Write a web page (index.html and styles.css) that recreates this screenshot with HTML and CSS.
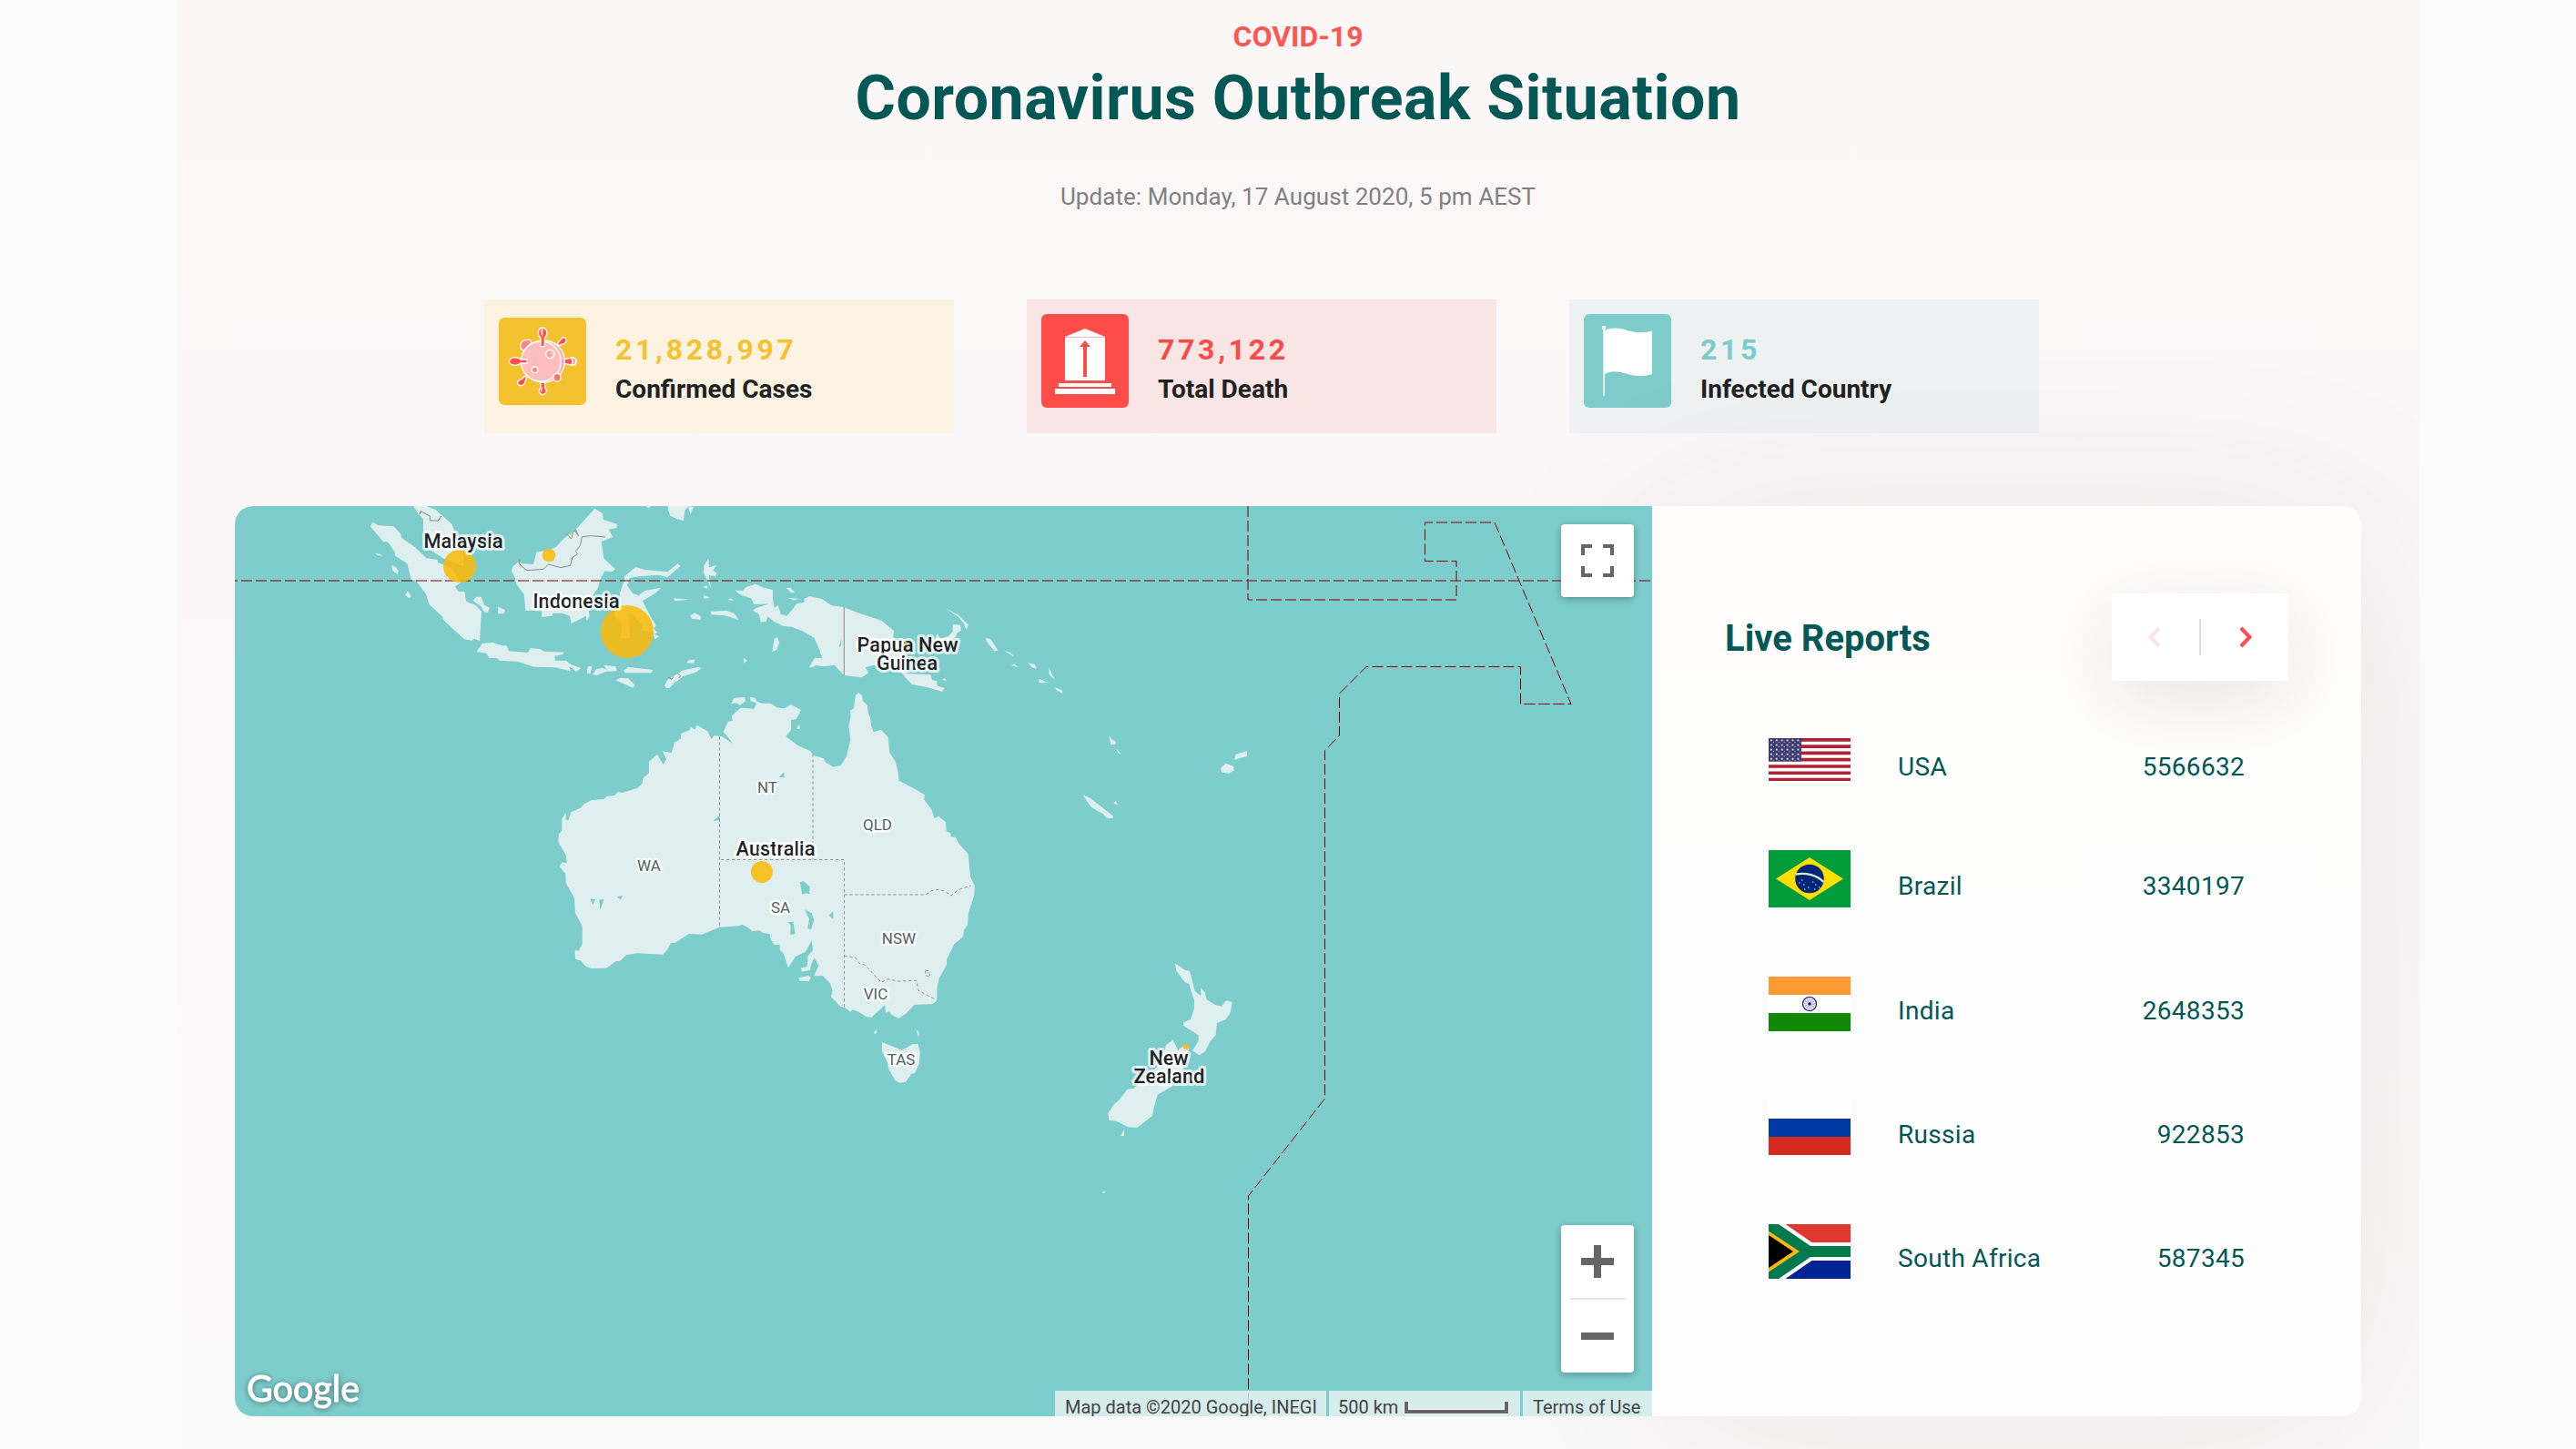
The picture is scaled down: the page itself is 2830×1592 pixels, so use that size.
FILE: index.html
```html
<!DOCTYPE html>
<html lang="en">
<head>
<meta charset="utf-8">
<title>Coronavirus Outbreak Situation</title>
<link rel="stylesheet" href="styles.css">
</head>
<body>
<main class="page">
  <header class="intro">
    <p class="eyebrow">COVID-19</p>
    <h1 class="title">Coronavirus Outbreak Situation</h1>
    <p class="updated">Update: Monday, 17 August 2020, 5 pm AEST</p>
  </header>

  <section class="stats">
    <article class="stat stat-cases">
      <svg class="stat-icon stat-icon-cases" viewBox="24 27 288 288">
        <rect x="24" y="27" width="288" height="288" rx="18" fill="#f4c22f"/>
        <g stroke="#fff" stroke-width="4" stroke-linejoin="round">
          <path d="M97 130c-6-20 6-30 20-30 8-2 14 2 14 10l-24 26z" fill="#ff8785"/>
          <path d="M218 112l14-18c8-4 15 0 14 8-1 9-8 13-16 13l-10 6z" fill="#ff4e4b"/>
          <path d="M116 223l-8 22c-6 8-17 8-22 0-2-8 5-13 13-15l11-10z" fill="#ff4e4b"/>
          <path d="M236 165l20-4c8-5 23-2 23 10s-14 17-23 10l-20-3z" fill="#ff4e4b"/>
          <path d="M262 160c10-3 17 3 17 11s-8 14-16 11c5-7 5-14-1-22z" fill="#ff9f9e"/>
          <path d="M162 240v18c-9 8-7 20 6 23 14-3 17-15 8-24v-17z" fill="#ff4e4b"/>
          <circle cx="172" cy="171" r="69" fill="#ffa9a8"/>
          <circle cx="163" cy="171" r="66" fill="#ffbdbd"/>
          <path d="M162 122V94c-11-9-11-32 6-34 17 2 18 24 7 34v28z" fill="#ff4e4b"/>
          <path d="M118 165H96c-8-9-35-10-38 6 3 16 28 16 38 6h22z" fill="#ff4e4b"/>
          <ellipse cx="193" cy="147" rx="14" ry="14" fill="#ffbdbd"/>
          <ellipse cx="216" cy="224" rx="12" ry="13" fill="#ff7371"/>
          <circle cx="143" cy="199" r="10" fill="#ff8785"/>
        </g>
        <path d="M161 70c3-8 8-8 10-4-3 8 1 14-3 25-5-6-7-15-7-21zM165 252c4 8 3 16 0 22-7-7-5-16 0-22z" fill="#ffbdbd"/>
        <path d="M193 136c5 6 5 16 0 22-14-3-14-19 0-22z" fill="#ff9f9e"/>
      </svg>
      <div class="stat-text"><strong class="stat-value">21,828,997</strong><span class="stat-label">Confirmed Cases</span></div>
    </article>
    <article class="stat stat-deaths">
      <svg class="stat-icon" viewBox="0 0 96 103">
        <rect width="96" height="103" rx="6" fill="#fe4c49"/>
        <path d="M26 25L48 16l22 9v48H26zM19 76h58v4H19zM15 82h66v6H15z" fill="#fff"/>
        <path d="M26 25.4h44" stroke="#fe9c9a" stroke-width=".8"/>
        <path d="M46 69V36h-4l6-7 6 7h-4v33z" fill="#fe4c49"/>
      </svg>
      <div class="stat-text"><strong class="stat-value">773,122</strong><span class="stat-label">Total Death</span></div>
    </article>
    <article class="stat stat-countries">
      <svg class="stat-icon" viewBox="0 0 96 103">
        <rect width="96" height="103" rx="6" fill="#7dcccb"/>
        <circle cx="22" cy="15" r="2.2" fill="#fff"/>
        <path d="M21.3 16v74h1.6V66c18-9 28 8 52 0V18.500c-24 7-32-9-52-.5v-2z" fill="#fff"/>
      </svg>
      <div class="stat-text"><strong class="stat-value">215</strong><span class="stat-label">Infected Country</span></div>
    </article>
  </section>

  <section class="dashboard">
    <div class="map">
      <svg class="map-canvas" viewBox="258 556 1557 1000">
        <g class="land" transform="translate(380 540) scale(.333333)">
          <path d="M80 115L88 101 108 112 158 115 182 142 183 153 226 182 265 220 302 225 303 234 345 250 380 300 360 313 370 329 391 330 396 362 428 375 447 395 441 493 424 485 415 491 390 487 350 450 320 422 318 412 275 373 264 338 231 293 215 290 202 238 163 212 161 200 138 166 124 166z"/>
          <path d="M222 48L265 48 295 60 350 108 362 145 385 200 388 248 320 220 275 190 255 130 255 90 240 75z"/>
          <path d="M96 203l16 3 9 7-17-3zM150 243l15 7 8 12-2 11-17-12zM204 328l11 18-7 6-12-11zM418 360l12-13h16l10 27 18 9-6 17-12-3-11-19zM502 380l23 11-5 12h-19z"/>
          <path d="M545 262L552 245 572 230 580 238 618 240 628 200 660 194 690 185 718 155 760 123 820 56 846 72 848 93 893 107 893 120 866 125 880 150 842 165 850 220 888 256 876 265 853 262 838 290 830 320 815 340 800 395 803 410 795 427 790 410 780 417 742 435 738 410 712 401 682 401 680 410 645 414 645 392 592 392 587 340 562 306 558 285z"/>
          <path d="M431 528L450 500 485 498 515 508 530 508 537 526 600 531 608 516 640 519 654 527 720 530 713 538 688 542 690 557 725 557 742 570 776 583 757 594 747 583 736 577 740 592 690 580 620 578 565 560 508 558 498 550 472 548 462 533z"/>
          <path d="M797 577l15-2-6 25h-12zM813 604l13-19 19-3 15 5-11-15 41 5 3 15-35 1-30 12zM915 590l15-12 81 10-3 10h-88zM889 622l16-8 25 2 23 22-7 9zM1050 640l10-20 38-22 10-8 52-11 12 3-17 13-45 15-25 20-19 18h-11zM1123 565l7-9 20-2-3 12zM1311 548l11 8-10 11z"/>
          <path d="M918 294L918 280 933 268 955 249 985 258 1060 265 1094 238 1102 246 1060 283 1030 275 965 280 935 285 927 310 945 335 965 343 985 327 1040 317 1020 335 978 360 990 385 1003 410 1022 442 1014 452 1028 466 1015 470 1033 477 1018 487 1010 462 975 458 975 435 955 420 938 395 930 410 937 483 906 484 910 435 885 410 885 390 905 370 902 335z"/>
          <path d="M1061 48h69l-13 14-4 35-23-7-20-10-8-18zM1128 48l18 2-10 26zM990 48h15l-7 7zM1195 220l2 30 25-8-12 18 12 8-3 12-23-5 7 43-18-38-7-15 2-20zM1080 352l52 4-47 5zM1180 342l20 9-20 2zM1176 315l14-5 2 10zM1258 358l10-6 12 8zM1134 410l16-10 20 12-2 10-26-2zM1202 395l53-2 25 9 15 22-45-15-45-3z"/>
        </g>
        <g class="land" transform="translate(780 540) scale(.333333)">
          <path d="M82 325L108 328 118 316 150 305 180 318 207 324 207 355 212 383 225 376 233 404 253 410 275 385 285 370 311 365 310 355 328 345 370 355 400 375 442 382 500 404 565 425 606 459 604 483 640 510 640 590 650 600 727 604 733 622 748 625 748 640 773 648 765 660 718 646 667 636 650 620 630 595 590 575 540 572 512 580 523 598 500 613 442 606 410 572 370 577 350 573 335 580 327 580 345 548 370 550 360 520 343 482 305 460 268 446 240 443 210 428 190 412 185 428 167 431 162 405 142 393 150 385 195 370 145 372 135 352 98 340z"/>
          <path d="M250 317h15l15 17h-12zM257 350l38 4-20 4zM205 528l7-43 10-5 7 18-9 24zM740 490l10-22 7 17 28-7 15-16v-24l25 2 3 18-13 8-5 14-40 20-40 5zM775 384l45 24 32 32-7 16-7-18-18-24zM909 482l16 5 25 37-13 2-25-31zM970 525l20 5 14 16zM992 573l11-5 12 11zM1047 563l23 7 7 15-15-5zM1116 580l21 42-19-19zM1085 618l33 13-34-1zM1135 645l25 10 3 10-18-7zM765 622l8-6 9 8z"/>
          <path class="water" d="M433 485v22l-9 8z"/>
        </g>
        <g class="land" transform="translate(590 740) scale(.333333)">
          <path d="M1050 72L1060 62 1072 74 1074 90 1089 105 1091 130 1098 145 1101 172 1109 193 1134 185 1157 210 1162 260 1181 290 1190 325 1193 353 1235 375 1278 400 1275 415 1300 448 1310 478 1322 470 1347 490 1349 520 1362 525 1365 538 1380 540 1390 560 1421 595 1428 670 1442 698 1441 730 1422 790 1419 828 1407 845 1404 868 1375 892 1350 943 1350 960 1325 1005 1318 1040 1318 1078 1303 1089 1243 1092 1215 1122 1191 1136 1168 1125 1162 1114 1149 1118 1147 1092 1102 1133 1085 1131 1060 1115 1040 1108 1033 1115 1015 1102 1000 1098 969 1065 974 1045 965 1020 942 996 913 997 928 962 914 937 903 960 900 978 872 983 870 970 890 967 893 930 909 912 905 880 885 917 852 933 828 970 813 925 800 910 800 895 780 893 768 870 767 858 745 855 732 847 709 849 695 837 675 827 665 832 601 836 543 860 500 858 456 887 441 888 432 905 416 926 330 922 294 928 273 948 260 948 229 971 180 972 160 965 143 946 126 941 125 911 138 914 149 890 149 832 126 790 123 740 95 690 94 660 75 637 82 622 98 625 96 600 70 555 72 530 82 518 82 480 95 458 95 483 104 483 112 457 143 443 155 430 180 417 220 414 230 404 255 402 267 390 280 393 330 378 347 362 349 345 369 328 369 290 396 267 416 300 426 283 414 256 443 262 453 227 473 215 475 197 503 187 506 175 520 185 527 170 562 190 575 216 583 204 610 208 645 231 625 205 614 192 630 158 645 155 641 140 671 113 715 116 724 98 703 90 702 77 718 80 725 92 742 98 770 98 790 112 815 115 836 102 870 120 855 150 837 153 837 185 820 207 860 238 900 255 912 270 945 280 950 292 977 308 1002 302 1020 272 1033 218 1027 175 1034 140 1032 122 1044 115z"/>
          <path d="M639 100l11-20 35-2 1 14-18 12-13-7zM855 182l10-15 1 16zM862 1003l33-7 7 7-6 11-31-1zM1110 1187l7-17 3 16zM1249 1174l11 11-3 13z"/>
          <path d="M1137 1215L1202 1241 1240 1221 1256 1222 1262 1248 1260 1285 1245 1317 1233 1320 1215 1346 1193 1349 1178 1338 1157 1300 1156 1285 1137 1245z"/>
          <path class="water" d="M797 342l17-17 1 17zM580 486l22-19v16zM867 688l11-4 22 20-3 16 4 7-13-3-15 4zM882 777l23 13 8 22-10 32-11-4 5-30zM962 797l14-14v27zM827 820l17-2 7 40-16 3 1-31zM175 743l17 1-8 18zM205 745h15l-12 35zM264 735l20-3-10 14z"/>
        </g>
        <g class="land" transform="translate(1180 750) scale(.333333)">
          <path d="M333 925L365 947 380 950 388 975 398 1017 418 1033 417 1005 432 1022 437 1045 465 1062 485 1067 502 1048 521 1052 515 1088 500 1110 471 1122 467 1162 447 1185 432 1216 413 1228 390 1213 410 1182 410 1162 360 1130 360 1120 384 1110 396 1073 396 1048 378 993 366 988 337 950z"/>
          <path d="M325 1178L335 1195 342 1212 360 1198 375 1200 378 1212 365 1230 370 1260 345 1290 325 1330 275 1358 262 1405 258 1428 208 1467 178 1465 141 1446 115 1442 112 1420 133 1388 147 1377 176 1340 195 1338 240 1300 285 1255 303 1195z"/>
          <path d="M153 1495l12-22v20zM483 282l17-16 25 9 3 14-18 10-22-3zM528 254l5-18 37-11v17zM115 172l7 13 16 10-2 9-15 1zM138 215l17 21-10-4zM28 370l25 10 42 33 34 27-1 7-20-1-13-13-38-22zM130 398l7-9 7 14zM91 1682l10-8v8z"/>
        </g>

        <g class="country-borders">
          <path transform="translate(380 540) scale(.333333)" d="M243 76l3-11 31 16v14l16 1 10 1 12-16M571 223v15l25 22 55-4 17-16 40 11 32-7 6-26 18-12-7-9 15-18 6-30 30-3 47 4M725 138l18 18 5-22 10-8 8 20-12-17M1062 612l12 7 6-9M1093 600l10 8-6 8M365 247l8-4 10 5"/>
          <path d="M927.300 667v75"/>
        </g>
        <g class="state-borders">
          <path transform="translate(590 740) scale(.333333)" d="M601.500 208v628M909 265v348M606 613.500h406.500V1100M1012 729h268l20-13 25-4 20 6 20 14 25-20 40-13M1012 930l38 7 15 21 15 2 55 58 20-11 35 7 60-2 7 33 61 32M1280 978l12 2 3 20-15-5z"/>
        </g>
        <g class="sea-borders">
          <path class="equator" d="M258 638h1557"/>
          <path d="M1371 556v103h229v-42.500h-34.500V574h76.500l84 199.500h-55.500v-41H1501l-29.500 29.500v46l-16 16.500V1207l-84 107v242"/>
        </g>

        <g class="case-circles">
          <circle cx="505" cy="622" r="18"/><circle cx="603" cy="610" r="7.300"/><circle cx="627" cy="586" r="1"/>
          <circle cx="689" cy="694" r="29"/><circle cx="837" cy="958" r="12"/>
          <circle cx="1303" cy="1150" r="3.200"/>
        </g>
        <g class="country-names">
          <text x="509" y="602" textLength="87">Malaysia</text>
          <text x="633" y="668" textLength="95">Indonesia</text>
          <text x="997" y="716" textLength="111">Papua New</text>
          <text x="996.500" y="736" textLength="67">Guinea</text>
          <text x="852" y="940" textLength="87">Australia</text>
          <text x="1284" y="1170" textLength="43">New</text>
          <text x="1284.500" y="1190" textLength="78">Zealand</text>
        </g>
        <g class="state-names">
          <text x="843" y="871">NT</text><text x="964" y="912">QLD</text><text x="713" y="957">WA</text>
          <text x="857.500" y="1003">SA</text><text x="987.500" y="1037">NSW</text><text x="962" y="1098">VIC</text><text x="990" y="1170">TAS</text>
        </g>
        <circle cx="995" cy="706" r="1.500" fill="#dfb92a"/>
      </svg>
      <button class="map-button fullscreen" aria-label="Fullscreen">
        <svg width="36" height="36" viewBox="0 0 36 36"><path d="M2 12V2h10M24 2h10v10M34 24v10H24M12 34H2V24" fill="none" stroke="#666" stroke-width="4"/></svg>
      </button>
      <div class="zoom-control">
        <button class="zoom-button" aria-label="Zoom in"><svg width="36" height="36" viewBox="0 0 36 36"><path d="M0 18h36M18 0v36" stroke="#666" stroke-width="8"/></svg></button>
        <button class="zoom-button" aria-label="Zoom out"><svg width="36" height="36" viewBox="0 0 36 36"><path d="M0 18h36" stroke="#666" stroke-width="8"/></svg></button>
      </div>
      <svg class="provider" width="150" height="60" viewBox="0 0 150 60"><text x="13" y="44" textLength="124" lengthAdjust="spacingAndGlyphs">Google</text></svg>
      <div class="attribution">
        <span class="credit">Map data ©2020 Google, INEGI</span>
        <span class="credit scale">500 km
          <svg width="118" height="16" viewBox="0 0 118 16"><path d="M3 0v12h110V0" fill="none" stroke="#fff" stroke-width="6"/><path d="M3 1v11h110V1" fill="none" stroke="#666" stroke-width="4"/></svg>
        </span>
        <span class="credit">Terms of Use</span>
      </div>
    </div>

    <aside class="reports">
      <div class="reports-head">
        <h2 class="reports-title">Live Reports</h2>
        <div class="pager">
          <svg class="pager-prev" width="16" height="24" viewBox="0 0 16 24"><path d="M13 2L3.500 12 13 22" fill="none" stroke="#fe4c49" stroke-width="4"/></svg>
          <i class="pager-rule"></i>
          <svg width="16" height="24" viewBox="0 0 16 24"><path d="M3 2l9.500 10L3 22" fill="none" stroke="#fe4c49" stroke-width="4"/></svg>
        </div>
      </div>
      <ul class="rows">
        <li class="row">
          <svg class="flag" width="90" height="47.400" viewBox="0 0 90 47.400">
            <defs><pattern id="stars" width="5.900" height="5.100" patternUnits="userSpaceOnUse"><path d="M2 1.500h1.700v1.600H2zM5 4h1.500v1.300H5z" fill="#fff"/></pattern></defs>
            <rect width="90" height="47.400" fill="#fff"/>
            <path d="M0 1.820h90M0 9.110h90M0 16.400h90M0 23.700h90M0 30.990h90M0 38.280h90M0 45.580h90" stroke="#b22234" stroke-width="3.650"/>
            <rect width="36" height="25.500" fill="#3c3b6e"/><rect width="35" height="25" fill="url(#stars)"/>
          </svg>
          <span>USA</span><span class="count">5566632</span>
        </li>
        <li class="row">
          <svg class="flag" width="90" height="63" viewBox="0 0 90 63">
            <rect width="90" height="63" fill="#009b3a"/><path d="M8 31.500L45 8l37 23.500L45 55z" fill="#fedf00"/><circle cx="45" cy="31.500" r="15.800" fill="#002776"/>
            <path d="M30 26.500c11-2 23 1 30.500 8.500" fill="none" stroke="#d6ecd9" stroke-width="2.400"/>
            <path d="M33 36h1.500M38 38h1.500M43 41h1.500M51 38h1.500M55 41h1.500M39 43h1.500M50 43h1.500M36 33h1.500M48 35h1.500" stroke="#9fb0d0" stroke-width="1.300"/>
          </svg>
          <span>Brazil</span><span class="count">3340197</span>
        </li>
        <li class="row">
          <svg class="flag" width="90" height="60" viewBox="0 0 90 60">
            <rect width="90" height="20" fill="#ff9933"/><rect y="20" width="90" height="20" fill="#fff"/><rect y="40" width="90" height="20" fill="#128807"/>
            <g fill="none" stroke="#000088"><circle cx="45" cy="30" r="7.500" stroke-width="1.200"/><circle cx="45" cy="30" r="4" stroke-width="4" stroke-opacity=".35" stroke-dasharray="1 1"/></g><circle cx="45" cy="30" r="1.700" fill="#000088"/>
          </svg>
          <span>India</span><span class="count">2648353</span>
        </li>
        <li class="row">
          <svg class="flag" width="90" height="60" viewBox="0 0 90 60"><rect width="90" height="20" fill="#fff"/><rect y="20" width="90" height="20" fill="#0039a6"/><rect y="40" width="90" height="20" fill="#d52b1e"/></svg>
          <span>Russia</span><span class="count">922853</span>
        </li>
        <li class="row">
          <svg class="flag" width="90" height="60" viewBox="0 0 90 60">
            <rect width="90" height="60" fill="#fff"/><path d="M18.500 0H90v20H47.500z" fill="#de3831"/><path d="M18.500 60H90V40H47.500z" fill="#002395"/>
            <path d="M0 0h11l35 24h44v12H46L11 60H0z" fill="#007a4d"/><path d="M0 7.500L34 30 0 52.500z" fill="#ffb612"/><path d="M0 12l27 18L0 48z"/>
          </svg>
          <span>South Africa</span><span class="count">587345</span>
        </li>
      </ul>
    </aside>
  </section>
</main>
</body>
</html>
```
FILE: styles.css
```css
* { box-sizing: border-box; }
body {
  margin: 0;
  background: #fbfbfb;
  font-family: Roboto, "Liberation Sans", sans-serif;
  height: 1592px;
  overflow: hidden;
}
h1, h2, p, ul { margin: 0; padding: 0; }
.page {
  width: 2463px;
  height: 1592px;
  margin-left: 195px;
  padding: 21px 64px 0 63px;
  background: linear-gradient(#fcf7f7, #fbf7f8 35%, #fbf8f9 60%, #fbfafa);
  overflow: hidden;
}

.intro { text-align: center; height: 308px; }
.eyebrow { font-size: 32px; line-height: 38px; font-weight: 700; color: #fe5653; }
.title { margin-top: 9px; font-size: 68px; line-height: 80px; font-weight: 700; color: #035755; letter-spacing: .5px; }
.updated { margin-top: 53px; font-size: 26px; line-height: 30px; color: #808080; letter-spacing: .05px; }

.stats { display: flex; gap: 80px; margin-left: 274px; height: 227px; }
.stat { display: flex; align-items: flex-start; width: 516px; height: 147px; padding: 16px; gap: 32px; }
.stat-cases { background: #fbf2e2; color: #f4c22f; }
.stat-deaths { background: #fae5e5; color: #f64b48; }
.stat-countries { background: #eef2f2; color: #7dcccb; }
.stat-icon { width: 96px; height: 103px; flex: none; }
.stat-icon-cases { height: 96px; margin-top: 4px; }
.stat-text { display: flex; flex-direction: column; padding-top: 19px; }
.stat-value { font-size: 32px; line-height: 40px; font-weight: 700; letter-spacing: 3.7px; }
.stat-label { margin-top: 7px; font-size: 28px; line-height: 34px; font-weight: 700; color: #212121; }

.dashboard { display: flex; width: 2336px; height: 1000px; }
.map {
  position: relative;
  z-index: 1;
  width: 1557px;
  background: #7ecdcd;
  border-radius: 20px 0 0 20px;
  overflow: hidden;
}
.map-canvas { display: block; width: 1557px; height: 1000px; }
.land { fill: #dfefef; }
.water { fill: #7ecdcd; }
.country-borders { fill: none; stroke: #8a8a8a; stroke-width: 1; }
.country-borders path[transform] { stroke-width: 3; }
.state-borders { fill: none; stroke: #8c9494; stroke-width: 3; stroke-dasharray: 10 8; }
.sea-borders { fill: none; stroke: #800000; stroke-width: 1; stroke-dasharray: 12 4; }
.equator { stroke-dashoffset: 9; }
.case-circles { fill: #fbb905; fill-opacity: .85; }
.country-names, .state-names { text-anchor: middle; paint-order: stroke; stroke: rgba(255, 255, 255, .75); stroke-linejoin: round; }
.country-names { font-size: 22px; font-weight: 500; fill: #212121; stroke-width: 6px; }
.state-names { font-size: 17px; fill: #546360; stroke-width: 5px; }

button { border: 0; padding: 0; background: #fff; display: grid; place-items: center; }
.map-button, .zoom-control { position: absolute; right: 20px; width: 80px; background: #fff; border-radius: 4px; box-shadow: 0 2px 8px rgba(0, 0, 0, .3); }
.fullscreen { top: 20px; height: 80px; }
.zoom-control { bottom: 48px; height: 162px; padding: 0 10px; }
.zoom-button { width: 60px; height: 80px; }
.zoom-button + .zoom-button { height: 82px; border-top: 2px solid #e6e6e6; }
.provider { position: absolute; left: 0; bottom: 0; filter: drop-shadow(0 1px 3px rgba(0, 0, 0, .45)); }
.provider text { font-family: Lato, sans-serif; font-size: 40px; fill: #fff; stroke: #fff; stroke-width: 1px; }
.attribution { position: absolute; right: 0; bottom: 0; display: flex; gap: 3px; height: 28px; font-size: 20px; line-height: 36px; color: #444; white-space: nowrap; }
.credit { background: rgba(245, 245, 245, .75); padding: 0 11px 0 11px; height: 28px; width: 298px; }
.scale { display: flex; align-items: flex-start; width: 210px; padding: 0 0 0 10px; gap: 6px; }
.scale svg { margin-top: 11px; }
.credit:last-child { width: 142px; }

.reports {
  width: 779px;
  padding: 96px 80px 0;
  background: linear-gradient(#fefdfc, #fdfdfd 60%);
  border-radius: 0 20px 20px 0;
  box-shadow: 0 20px 220px rgba(60, 20, 20, .09);
}
.reports-head { display: flex; justify-content: space-between; align-items: center; height: 96px; }
.reports-title { font-size: 40px; line-height: 48px; font-weight: 700; color: #035755; padding-top: 4px; }
.pager { display: flex; align-items: center; justify-content: space-between; width: 194px; height: 96px; padding: 0 39px; background: #fff; box-shadow: 0 20px 80px rgba(90, 30, 30, .11); }
.pager-prev { opacity: .15; }
.pager-rule { width: 2px; height: 40px; background: #dedede; }
.rows { list-style: none; padding: 25px 48px 0 48px; }
.row { display: grid; grid-template-columns: 142px 1fr auto; align-items: center; padding: 38px 0; font-size: 28px; line-height: 34px; color: #035755; letter-spacing: .3px; }
.row span { position: relative; top: 8px; }
.flag { display: block; }
```
